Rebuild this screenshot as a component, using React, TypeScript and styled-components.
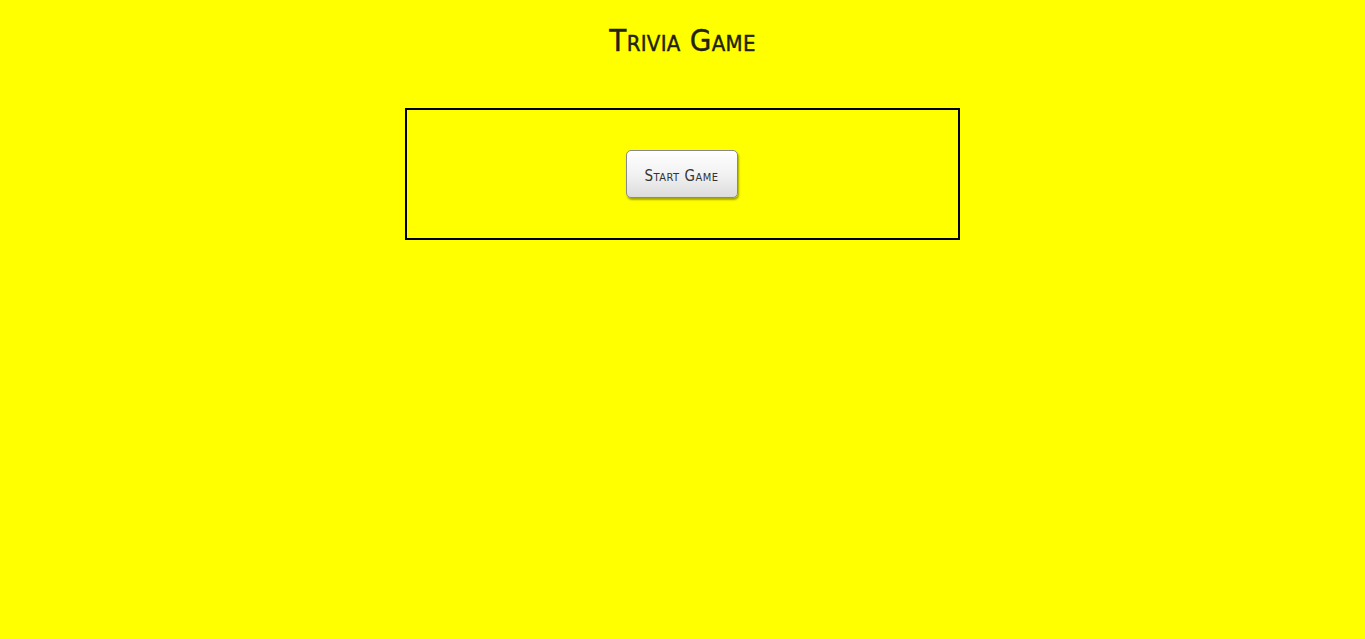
import React from "react";
import styled, { createGlobalStyle } from "styled-components";

const Global = createGlobalStyle`
  html, body { margin: 0; padding: 0; background: #ffff00; }
  body { font-family: "Liberation Sans", Arial, sans-serif; min-height: 639px; }
`;

const Page = styled.main`
  display: flex;
  flex-direction: column;
  align-items: center;
  padding-top: 20px;
`;

const Title = styled.h1`
  margin: 0;
  font-family: "DejaVu Sans Condensed", "DejaVu Sans", sans-serif;
  font-variant: small-caps;
  font-weight: normal;
  font-size: 31px;
  line-height: 40px;
  letter-spacing: 0.3px;
  color: #22220f;
  -webkit-text-stroke: 0.4px #22220f;
`;

const Panel = styled.section`
  margin-top: 48px;
  width: 551px;
  height: 128px;
  border: 2px solid #000;
  display: flex;
  align-items: center;
  justify-content: center;
`;

const StartButton = styled.button`
  width: 112px;
  height: 48px;
  padding: 3px 0 0;
  margin-left: -2px;
  border: 1px solid #8a8a8a;
  border-radius: 5px;
  background: linear-gradient(to bottom, #ffffff 0%, #f2f2f2 50%, #dcdcdc 100%);
  box-shadow: 1px 2px 2px rgba(0, 0, 0, 0.35);
  font-family: "DejaVu Sans Condensed", "DejaVu Sans", sans-serif;
  font-variant: small-caps;
  font-size: 15px;
  color: #333;
  letter-spacing: 0.5px;
  cursor: pointer;
`;

export default function App() {
  return (
    <>
      <Global />
      <Page>
        <Title>Trivia Game</Title>
        <Panel>
          <StartButton>Start Game</StartButton>
        </Panel>
      </Page>
    </>
  );
}
